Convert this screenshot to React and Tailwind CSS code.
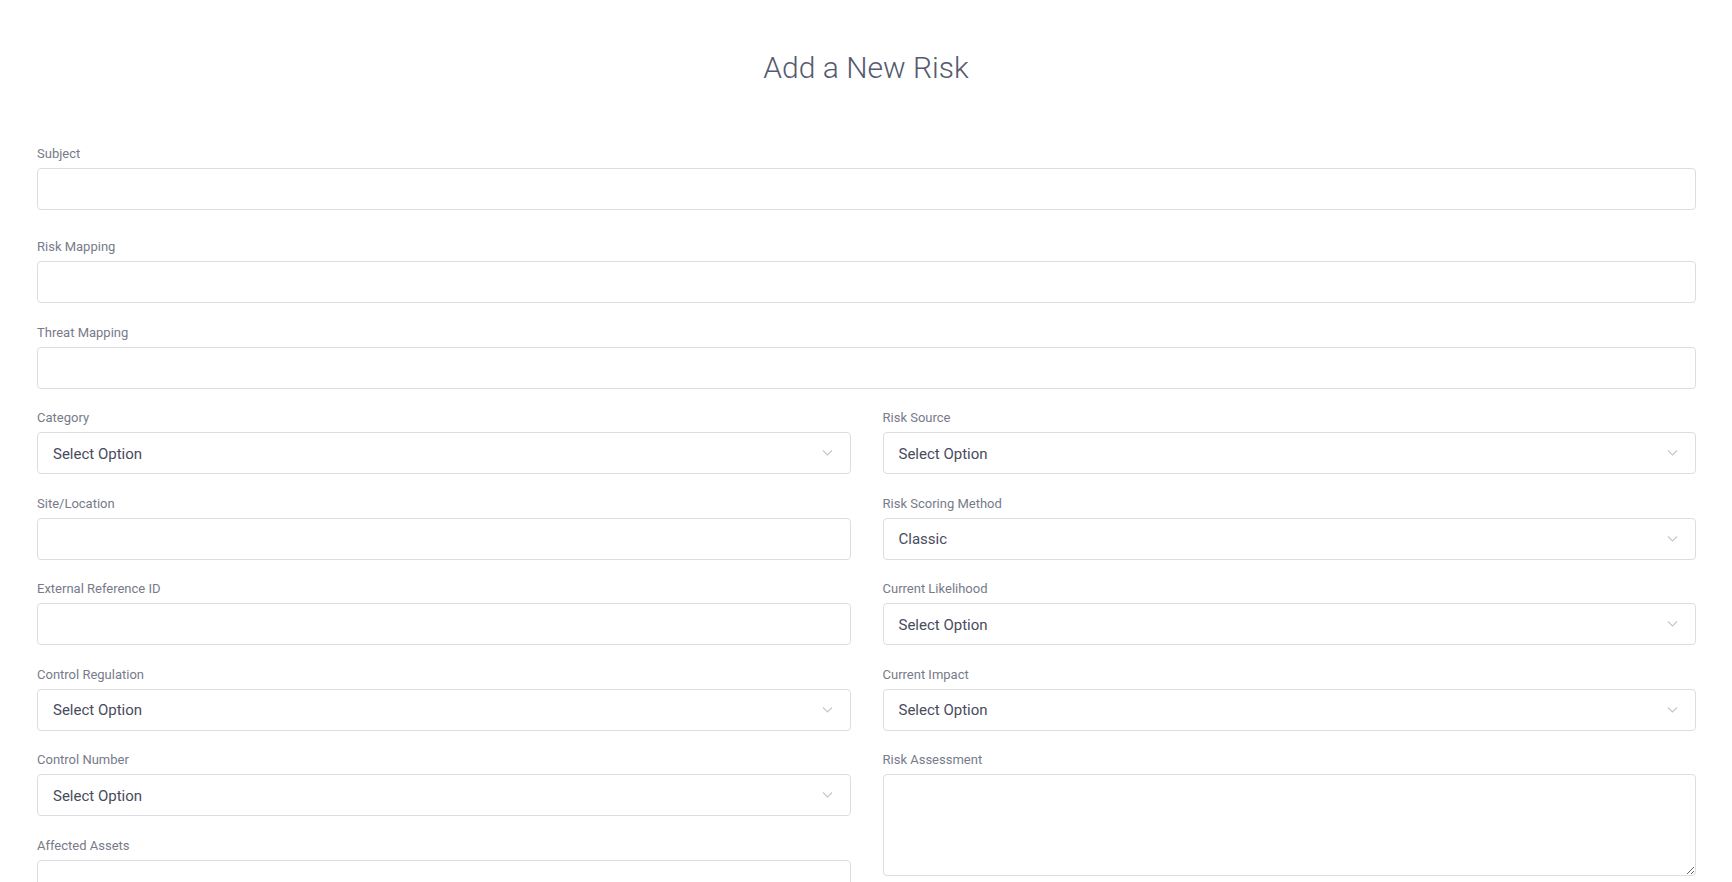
import React from 'react';

// Add a New Risk — risk register entry form

const Chevron = () => (
  <svg
    className="pointer-events-none absolute right-[18px] top-1/2 -translate-y-1/2"
    width="11"
    height="7"
    viewBox="0 0 11 7"
    fill="none"
  >
    <path d="M1 1l4.5 4.5L10 1" stroke="#c4c6cf" strokeWidth="1.1" />
  </svg>
);

const Label = ({ children }) => (
  <label className="mb-1 block text-[13px] leading-5 text-[#777b8a]">{children}</label>
);

const TextField = ({ label, className = 'mb-[19.5px]' }) => (
  <div className={className}>
    <Label>{label}</Label>
    <input
      type="text"
      className="block h-[42px] w-full rounded-[4px] border border-[#dcdde1] bg-white px-4 text-[15px] text-[#474c5c] outline-none"
    />
  </div>
);

const SelectField = ({ label, value = 'Select Option' }) => (
  <div className="mb-[19.5px]">
    <Label>{label}</Label>
    <div className="relative">
      <select
        defaultValue={value}
        className="block h-[42px] w-full appearance-none rounded-[4px] border border-[#dcdde1] bg-white pl-[15px] pr-10 pt-[2px] text-[15px] text-[#474c5c] outline-none"
      >
        <option>{value}</option>
      </select>
      <Chevron />
    </div>
  </div>
);

const App = () => {
  return (
    <div
      className="h-screen overflow-hidden bg-white"
      style={{ fontFamily: 'Roboto, "Noto Sans", sans-serif' }}
    >
      <h1 className="pt-[50px] text-center text-[30px] font-light leading-9 text-[#555a70]">
        Add a New Risk
      </h1>

      <form className="mt-[58px] pl-[37px] pr-[36px]">
        <TextField label="Subject" className="mb-[27px]" />
        <TextField label="Risk Mapping" />
        <TextField label="Threat Mapping" />

        <div className="grid grid-cols-2 gap-x-8">
          {/* Left column */}
          <div className="flex flex-col">
            <SelectField label="Category" />
            <TextField label="Site/Location" />
            <TextField label="External Reference ID" />
            <SelectField label="Control Regulation" />
            <SelectField label="Control Number" />
            <TextField label="Affected Assets" />
          </div>

          {/* Right column */}
          <div className="flex flex-col">
            <SelectField label="Risk Source" />
            <SelectField label="Risk Scoring Method" value="Classic" />
            <SelectField label="Current Likelihood" />
            <SelectField label="Current Impact" />
            <div className="mb-[19.5px]">
              <Label>Risk Assessment</Label>
              <textarea className="block h-[102px] w-full rounded-[4px] border border-[#dcdde1] bg-white px-4 py-2 text-[15px] text-[#474c5c] outline-none" />
            </div>
          </div>
        </div>
      </form>
    </div>
  );
};

export default App;
